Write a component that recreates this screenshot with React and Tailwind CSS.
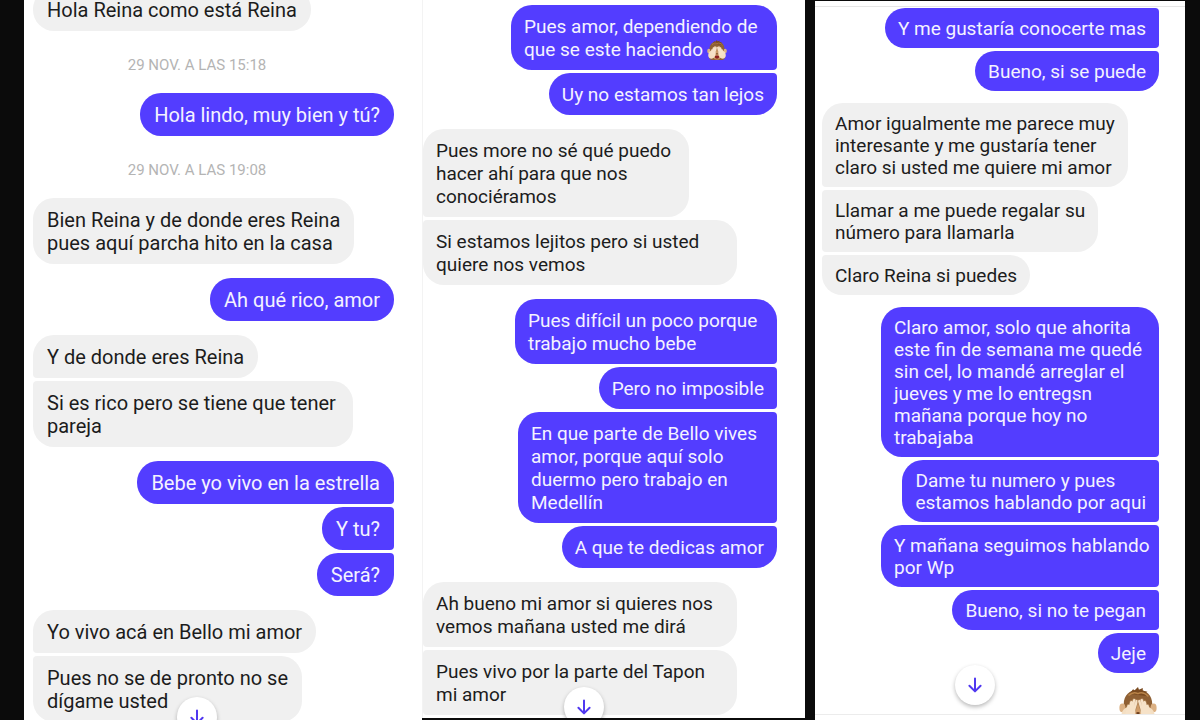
import clsx from "clsx";

function Hand() {
  return (
    <g strokeLinecap="round" fill="none">
      <path d="M8 28L10 20M10 28L13 16M12 29L16 14M14 30L18.6 15" stroke="#b08457" strokeWidth="4" />
      <path d="M2.500 32C2 26 5 22 9 21l8 3c1 5-1 11-6 13-4 1-8-1-8.500-5Z" fill="#f4dfc3" stroke="none" />
      <path d="M8 28L10 20M10 28L13 16M12 29L16 14M14 30L18.600 15" stroke="#f6e2c8" strokeWidth="2.600" />
    </g>
  );
}

function CoveredFace({ className }) {
  return (
    <svg viewBox="0 0 40 40" className={className} role="img" aria-label="Mono que se tapa los ojos">
      <path d="M5 18C5 9 11 3 20 3s15 6 15 15c1 6 1 12 0 20l-4 2H9l-4-2C4 30 4 24 5 18Z" fill="#8f6034" />
      <path d="M11 7l4-5 1 2 4-4 1 3 4-2v3l5 1-2 1 4 4Z" fill="#7a4a20" />
      <path d="M10 9C14 5 18 6 20 7c4-2 8 0 11 3" fill="none" stroke="#b98449" strokeWidth="1.6" />
      <ellipse cx="3.6" cy="22" rx="3.2" ry="4.6" fill="#dcb184" />
      <ellipse cx="36.4" cy="22" rx="3.2" ry="4.6" fill="#dcb184" />
      <path d="M20 18c6 0 9 6 9 12 0 5-4 9-9 9s-9-4-9-9c0-6 3-12 9-12Z" fill="#cf9c69" />
      <path d="M18 27q2-1.500 4 0l-1 2h-2Z" fill="#6b3d1c" />
      <path d="M15.500 32q4.500-2 9 0c0 4-2 5.500-4.500 5.500s-4.500-1.500-4.500-5.500Z" fill="#8c1f22" />
      <Hand />
      <g transform="translate(40 0) scale(-1 1)">
        <Hand />
      </g>
    </svg>
  );
}

function ScrollDown({ className }) {
  return (
    <button
      type="button"
      aria-label="Ir al último mensaje"
      className={clsx(
        "absolute flex size-10 items-center justify-center rounded-full bg-white shadow-[0_2px_4px_rgba(0,0,0,0.28)]",
        className
      )}
    >
      <svg viewBox="0 0 16 16" className="size-4" fill="none" stroke="#5038f0" strokeWidth="2" strokeLinecap="round" strokeLinejoin="round">
        <path d="M8 1.500V14M2.400 8.800L8 14.400L13.600 8.800" />
      </svg>
    </button>
  );
}

const sizes = {
  a: { bubble: "px-[14px] pt-[11px] pb-[9px] text-[20px] leading-[23px]", stack: "gap-[14px]" },
  b: { bubble: "px-[13px] pt-[10px] pb-[9px] text-[19px] leading-[23px]", stack: "gap-[14px]" },
  c: { bubble: "px-[13px] pt-[10px] pb-[8px] text-[19px] leading-[22px]", stack: "gap-[12px]" },
};

function Group({ mine, before, after, size, items }) {
  return (
    <ul className={clsx("flex flex-col gap-[3px]", mine ? "items-end" : "items-start")}>
      {items.map((item, i) => {
        const joinTop = i > 0 || before;
        const joinBottom = i < items.length - 1 || after;
        return (
          <li
            key={item.text}
            className={clsx(
              "rounded-[21px] whitespace-pre",
              sizes[size].bubble,
              item.width,
              mine ? "bg-[#533dff] text-[#f4f2ff]" : "bg-[#f0f0f0] text-[#1c1c1c]",
              joinTop && (mine ? "rounded-tr-[4px]" : "rounded-tl-[4px]"),
              joinBottom && (mine ? "rounded-br-[4px]" : "rounded-bl-[4px]")
            )}
          >
            {item.text}
            {item.face && <CoveredFace className="ml-1 inline-block size-5 align-[-4px]" />}
          </li>
        );
      })}
    </ul>
  );
}

function Stamp({ children }) {
  return (
    <p className="-my-[14px] pt-[24px] pr-[33px] pb-[18px] text-center text-[15px] leading-[20px] text-[#b4b4b4]">
      {children}
    </p>
  );
}

export default function App() {
  return (
    <main className="grid h-screen grid-cols-[24px_398fr_383fr_10px_370fr_15px] overflow-hidden bg-[#0b0b0b] font-['Roboto',sans-serif]">
      <section className="relative col-start-2 overflow-hidden bg-white">
        <div className={clsx("-mt-3 flex flex-col pr-[28px] pl-[9px]", sizes.a.stack)}>
          <Group size="a" items={[{ text: "Hola Reina como está Reina" }]} />
          <Stamp>29 NOV. A LAS 15:18</Stamp>
          <Group size="a" mine items={[{ text: "Hola lindo, muy bien y tú?" }]} />
          <Stamp>29 NOV. A LAS 19:08</Stamp>
          <Group size="a" items={[{ text: "Bien Reina y de donde eres Reina\npues aquí parcha hito en la casa" }]} />
          <Group size="a" mine items={[{ text: "Ah qué rico, amor" }]} />
          <Group
            size="a"
            items={[
              { text: "Y de donde eres Reina" },
              { text: "Si es rico pero se tiene que tener\npareja", width: "min-w-[320px]" },
            ]}
          />
          <Group size="a" mine items={[{ text: "Bebe yo vivo en la estrella" }, { text: "Y tu?" }, { text: "Será?" }]} />
          <Group
            size="a"
            items={[{ text: "Yo vivo acá en Bello mi amor" }, { text: "Pues no se de pronto no se\ndígame usted" }]}
          />
        </div>
        <ScrollDown className="-bottom-[17px] left-[153px]" />
      </section>

      <section className="relative mb-[2px] overflow-hidden border-l border-[#f3f3f3] bg-white">
        <div className={clsx("flex flex-col pt-[5px] pr-[28px]", sizes.b.stack)}>
          <Group
            size="b"
            mine
            items={[
              { text: "Pues amor, dependiendo de\nque se este haciendo", face: true, width: "min-w-[266px]" },
              { text: "Uy no estamos tan lejos" },
            ]}
          />
          <Group
            size="b"
            items={[
              { text: "Pues more no sé qué puedo\nhacer ahí para que nos\nconociéramos", width: "min-w-[266px]" },
              { text: "Si estamos lejitos pero si usted\nquiere nos vemos", width: "min-w-[314px]" },
            ]}
          />
          <Group
            size="b"
            mine
            items={[
              { text: "Pues difícil un poco porque\ntrabajo mucho bebe", width: "min-w-[262px]" },
              { text: "Pero no imposible" },
              {
                text: "En que parte de Bello vives\namor, porque aquí solo\nduermo pero trabajo en\nMedellín",
                width: "min-w-[259px]",
              },
              { text: "A que te dedicas amor" },
            ]}
          />
          <Group
            size="b"
            after
            items={[
              { text: "Ah bueno mi amor si quieres nos\nvemos mañana usted me dirá", width: "min-w-[314px]" },
              { text: "Pues vivo por la parte del Tapon\nmi amor", width: "min-w-[314px]" },
            ]}
          />
        </div>
        <ScrollDown className="-bottom-[9px] left-[141px]" />
      </section>

      <section className="relative col-start-5 mt-px flex flex-col overflow-hidden bg-white">
        <div className="h-[6px] shrink-0 border-b border-[#e6e6e6]" />
        <div className={clsx("flex min-h-0 flex-1 flex-col overflow-hidden pt-px pr-[26px] pl-[7px]", sizes.c.stack)}>
          <Group size="c" mine before items={[{ text: "Y me gustaría conocerte mas" }, { text: "Bueno, si se puede" }]} />
          <Group
            size="c"
            items={[
              { text: "Amor igualmente me parece muy\ninteresante y me gustaría tener\nclaro si usted me quiere mi amor" },
              { text: "Llamar a me puede regalar su\nnúmero para llamarla" },
              { text: "Claro Reina si puedes" },
            ]}
          />
          <Group
            size="c"
            mine
            items={[
              {
                text: "Claro amor, solo que ahorita\neste fin de semana me quedé\nsin cel, lo mandé arreglar el\njueves y me lo entregsn\nmañana porque hoy no\ntrabajaba",
                width: "w-[278px]",
              },
              { text: "Dame tu numero y pues\nestamos hablando por aqui" },
              { text: "Y mañana seguimos hablando\npor Wp", width: "w-[278px]" },
              { text: "Bueno, si no te pegan" },
              { text: "Jeje" },
            ]}
          />
          <CoveredFace className="mt-[2px] mr-[2px] size-[38px] shrink-0 self-end" />
        </div>
        <div className="h-[6px] shrink-0 border-t border-[#ececec]" />
        <ScrollDown className="bottom-[15px] left-[140px]" />
      </section>
    </main>
  );
}
